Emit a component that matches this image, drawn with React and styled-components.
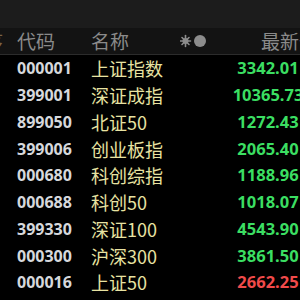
import React from "react";
import styled, { createGlobalStyle } from "styled-components";

const GlobalStyle = createGlobalStyle`
  html, body {
    margin: 0;
    padding: 0;
    background: #000;
    overflow: hidden;
  }
  body {
    width: 300px;
    height: 300px;
    font-family: "Noto Sans", "Noto Sans CJK SC", sans-serif;
  }
`;

const rows = [
  { code: "000001", name: "上证指数", price: "3342.01", up: true },
  { code: "399001", name: "深证成指", price: "10365.73", up: true },
  { code: "899050", name: "北证50", price: "1272.43", up: true },
  { code: "399006", name: "创业板指", price: "2065.40", up: true },
  { code: "000680", name: "科创综指", price: "1188.96", up: true },
  { code: "000688", name: "科创50", price: "1018.07", up: true },
  { code: "399330", name: "深证100", price: "4543.90", up: true },
  { code: "000300", name: "沪深300", price: "3861.50", up: true },
  { code: "000016", name: "上证50", price: "2662.25", up: false },
];

const Screen = styled.div`
  width: 300px;
  height: 300px;
  overflow: hidden;
  background: #000;
`;

const TopBar = styled.div`
  height: 28px;
  background: #1c1c1c;
`;

const Grid = styled.div`
  display: grid;
  grid-template-columns: 33px 74px 89px 56px 64px;
  margin-left: -16px;
  width: 316px;
`;

const HeaderRow = styled(Grid)`
  height: 26px;
  background: #131313;
  border-bottom: 1px solid #2c2c2c;
  align-items: center;
`;

const Row = styled(Grid)`
  height: 26.75px;
  align-items: center;
`;

const HeadCell = styled.div`
  font-family: "Noto Sans CJK SC", sans-serif;
  font-size: 19px;
  line-height: 26px;
  white-space: nowrap;
  padding-left: ${(p) => p.$indent || 0}px;
  color: ${(p) => p.$tint || "#8a8a8a"};
`;

const IconCell = styled.div`
  display: flex;
  align-items: center;
  height: 26px;
`;

const Code = styled.div`
  color: #d6d8dc;
  font-family: "Noto Sans", sans-serif;
  font-weight: 700;
  font-size: 16px;
  line-height: 26px;
`;

const Name = styled.div`
  color: #e8e3a2;
  font-family: "Noto Sans CJK SC", sans-serif;
  font-size: 18px;
  line-height: 26px;
  white-space: nowrap;
`;

const Price = styled.div`
  display: flex;
  justify-content: center;
  white-space: nowrap;
  color: ${(p) => (p.$up ? "#3bde62" : "#f04a4a")};
  font-family: "Noto Sans", sans-serif;
  font-weight: 700;
  font-size: 16.5px;
  line-height: 26px;
`;

function SettingIcons() {
  return (
    <svg width="30" height="14" viewBox="0 0 30 14">
      <g stroke="#8c8c8c" strokeWidth="1.6" strokeLinecap="round">
        <line x1="5.5" y1="1.5" x2="5.5" y2="12.5" />
        <line x1="0.5" y1="7" x2="10.5" y2="7" />
        <line x1="2" y1="3.5" x2="9" y2="10.5" />
        <line x1="9" y1="3.5" x2="2" y2="10.5" />
      </g>
      <circle cx="5.5" cy="7" r="3" fill="#8c8c8c" />
      <circle cx="20" cy="7" r="6" fill="#8c8c8c" />
    </svg>
  );
}

export default function App() {
  return (
    <Screen>
      <GlobalStyle />
      <TopBar />
      <HeaderRow>
        <HeadCell $tint="#7a6448">序</HeadCell>
        <HeadCell>代码</HeadCell>
        <HeadCell>名称</HeadCell>
        <IconCell>
          <SettingIcons />
        </IconCell>
        <HeadCell $indent={25}>最新价</HeadCell>
      </HeaderRow>
      {rows.map((r) => (
        <Row key={r.code}>
          <div />
          <Code>{r.code}</Code>
          <Name>{r.name}</Name>
          <div />
          <Price $up={r.up}>{r.price}</Price>
        </Row>
      ))}
    </Screen>
  );
}
